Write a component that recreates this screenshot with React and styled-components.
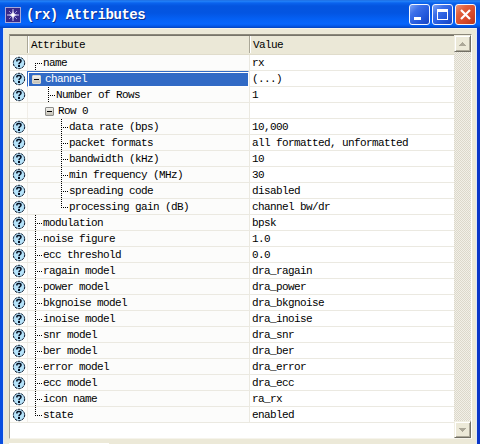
import React from "react";
import styled, { createGlobalStyle } from "styled-components";

const GlobalStyle = createGlobalStyle`
  html, body { margin: 0; padding: 0; }
  body { width: 480px; height: 444px; overflow: hidden; }
  * { box-sizing: border-box; }
`;

const Window = styled.main`
  width: 480px;
  height: 444px;
  display: flex;
  flex-direction: column;
  overflow: hidden;
  background: #ece9d8;
  font-family: "Liberation Mono", monospace;
  font-size: 11px;
  letter-spacing: -0.6px;
  color: #000;
`;

const TitleBar = styled.header`
  height: 28px;
  flex: none;
  display: flex;
  align-items: center;
  padding: 1px 5px 0 5px;
  background: linear-gradient(
    #1c66d8 0, #2484fa 1px, #0a63ee 3px, #0455df 6px, #0355e2 13px,
    #0460f4 19px, #0665fc 24px, #0358e8 26px, #0342bf 28px
  );
`;

const Title = styled.h1`
  flex: 1;
  margin: 0 0 0 5px;
  font-size: 14px;
  line-height: 28px;
  font-weight: bold;
  letter-spacing: -0.45px;
  color: #fff;
  text-shadow: 1px 1px 0 #0a2f8c;
`;

const Controls = styled.div`
  display: flex;
  gap: 2px;
  margin-right: -1px;
`;

const ControlButton = styled.button`
  width: 21px;
  height: 21px;
  padding: 0;
  border: 1px solid #f4f7ff;
  border-radius: 3px;
  display: flex;
  background: ${(p) =>
    p.$close
      ? "linear-gradient(135deg, #ee9478 0, #e0603c 30%, #d8492a 65%, #b9351a 100%)"
      : "linear-gradient(135deg, #7ea4f5 0, #3d70e9 30%, #2459dc 65%, #1743c2 100%)"};
`;

const Frame = styled.div`
  flex: 1;
  min-height: 0;
  border-left: 3px solid #0a4fe0;
  border-right: 3px solid #0a36c8;
  box-shadow: inset 1px 0 0 #dfe8f4, inset -1px 0 0 #dfe8f4, inset 0 1px 0 #f5f3ea;
  padding: 6px 5px 0 6px;
  display: flex;
  flex-direction: column;
`;

const Panel = styled.section`
  height: 405px;
  flex: none;
  display: flex;
  border: 1px solid #aca899;
  border-top-color: #8c887a;
  border-right-color: #fff;
  border-bottom-color: #f6f4ec;
  background: #fff;
`;

const Table = styled.div`
  flex: 1;
  display: flex;
  flex-direction: column;
`;

const GridLine = styled.div`
  display: grid;
  grid-template-columns: 17px 222px 1fr;
`;

const HeaderLine = styled(GridLine)`
  height: 20px;
  background: #ebe8d7;
  border-top: 1px solid #77746a;
  border-bottom: 1px solid #e0dccb;
`;

const HeaderCell = styled.div`
  padding-left: 3px;
  line-height: 19px;
  height: 17px;
  border-left: ${(p) => (p.$first ? "0" : "1px solid #aaa797")};
  box-shadow: ${(p) => (p.$first ? "none" : "inset 1px 0 0 #fff")};
`;

const Row = styled(GridLine)`
  height: 16px;
  border-bottom: 1px solid #ebe9e1;
`;

const HelpCell = styled.div`
  display: flex;
  padding: 1px 0 0 2px;
  background: #fdfdfb;
`;

const NameCell = styled.div`
  display: flex;
  height: ${(p) => (p.$selected ? "16px" : "15px")};
  border-left: 1px solid #f1eee8;
  background: #fcfcfb;
  padding-left: ${(p) => p.$indent}px;
  line-height: 16px;
  white-space: pre;
  ${(p) =>
    p.$selected &&
    `
    color: #fff;
    background: #316ac5;
    border: 1px solid #316ac5;
    border-right-color: #fff;
    border-bottom-color: #fff;
    box-shadow: inset 1px 1px 0 #fff;
    line-height: 14px;
  `}
`;

const ValueCell = styled.div`
  height: 15px;
  border-left: 1px solid #ebe9e1;
  padding-left: 2px;
  line-height: 16px;
  white-space: pre;
`;

const Toggle = styled.span`
  width: 9px;
  height: 9px;
  flex: none;
  margin: ${(p) => (p.$selected ? "3px 4px 0 0" : "4px 4px 0 0")};
  display: flex;
  align-items: center;
  justify-content: center;
  border: 1px solid ${(p) => (p.$selected ? "#dad7cd" : "#8b8b88")};
  border-radius: 1px;
  background: linear-gradient(#f3f2ee, #c4c0b4);
  &::before {
    content: "";
    width: 5px;
    height: 1px;
    background: #000;
  }
`;

const ScrollBar = styled.aside`
  width: 17px;
  display: flex;
  flex-direction: column;
  justify-content: space-between;
  background: repeating-conic-gradient(#dcd8cb 0 25%, #f2f0e8 0 50%) 0 0 / 2px 2px;
`;

const ScrollButton = styled.button`
  width: 17px;
  height: 17px;
  padding: 0;
  display: flex;
  align-items: center;
  justify-content: center;
  background: #ece9d8;
  border: 1px solid;
  border-color: #f1efe2 #716f64 #716f64 #f1efe2;
  box-shadow: inset 1px 1px 0 #fff, inset -1px -1px 0 #aca899;
`;

const FieldEdge = styled.div`
  width: 100px;
  height: 1px;
  margin-top: 4px;
  background: #fff;
`;

const Svg = styled.svg`
  display: block;
  flex: none;
`;

function StarLogo() {
  return (
    <Svg width="16" height="16" viewBox="0 0 16 16">
      <rect width="16" height="16" fill="#a9a8d8" />
      <rect x="1" y="1" width="14" height="14" fill="#38298a" />
      <path d="M8 2v12M2 8h12" stroke="#d6d0f4" strokeWidth="1" />
      <path d="M4 4l8 8M12 4l-8 8" stroke="#9e91d4" strokeWidth="1" />
      <path d="M8 4l1 3 3 1-3 1-1 3-1-3-3-1 3-1z" fill="#fff" />
    </Svg>
  );
}

function HelpIcon() {
  return (
    <Svg width="14" height="14" viewBox="0 0 14 14">
      <circle cx="7" cy="7" r="5.6" fill="#b5e3fa" stroke="#7c98ac" strokeWidth="0.9" />
      <circle
        cx="7"
        cy="7"
        r="5.7"
        fill="none"
        stroke="#101c30"
        strokeWidth="1"
        strokeDasharray="2.2 1.38"
      />
      <path
        d="M4.9 5.4V4.3Q5.3 3.4 7 3.4Q9 3.4 9 5Q9 6 7.9 6.7Q7 7.2 7 8.3"
        fill="none"
        stroke="#000a1c"
        strokeWidth="1.5"
      />
      <path d="M6 9h2v2H6z" fill="#000a1c" />
    </Svg>
  );
}

const branchPaths = {
  first: "M0.5 8v8",
  middle: "M0.5 0v16",
  last: "M0.5 0v9",
};

function Branch({ kind }) {
  return (
    <Svg width="8" height="16" viewBox="0 0 8 16" shapeRendering="crispEdges">
      <path d={branchPaths[kind]} stroke="#000" strokeDasharray="1 1" />
      <path d="M2 8.5h5" stroke="#000" strokeDasharray="1 1" />
    </Svg>
  );
}

function Arrow({ down }) {
  return (
    <Svg width="7" height="4" viewBox="0 0 7 4" shapeRendering="crispEdges">
      <path d={down ? "M0 0h7v1H0zM1 1h5v1H1zM2 2h3v1H2zM3 3h1v1H3z" : "M3 0h1v1H3zM2 1h3v1H2zM1 2h5v1H1zM0 3h7v1H0z"} fill="#aca899" />
    </Svg>
  );
}

const rows = [
  { name: "name", value: "rx", kind: "first", indent: 7 },
  { name: "channel", value: "(...)", kind: "toggle", indent: 4, selected: true },
  { name: "Number of Rows", value: "1", kind: "middle", indent: 20 },
  { name: "Row 0", value: "", kind: "toggle", indent: 17, noHelp: true },
  { name: "data rate (bps)", value: "10,000", kind: "middle", indent: 33 },
  { name: "packet formats", value: "all formatted, unformatted", kind: "middle", indent: 33 },
  { name: "bandwidth (kHz)", value: "10", kind: "middle", indent: 33 },
  { name: "min frequency (MHz)", value: "30", kind: "middle", indent: 33 },
  { name: "spreading code", value: "disabled", kind: "middle", indent: 33 },
  { name: "processing gain (dB)", value: "channel bw/dr", kind: "last", indent: 33 },
  { name: "modulation", value: "bpsk", kind: "middle", indent: 7 },
  { name: "noise figure", value: "1.0", kind: "middle", indent: 7 },
  { name: "ecc threshold", value: "0.0", kind: "middle", indent: 7 },
  { name: "ragain model", value: "dra_ragain", kind: "middle", indent: 7 },
  { name: "power model", value: "dra_power", kind: "middle", indent: 7 },
  { name: "bkgnoise model", value: "dra_bkgnoise", kind: "middle", indent: 7 },
  { name: "inoise model", value: "dra_inoise", kind: "middle", indent: 7 },
  { name: "snr model", value: "dra_snr", kind: "middle", indent: 7 },
  { name: "ber model", value: "dra_ber", kind: "middle", indent: 7 },
  { name: "error model", value: "dra_error", kind: "middle", indent: 7 },
  { name: "ecc model", value: "dra_ecc", kind: "middle", indent: 7 },
  { name: "icon name", value: "ra_rx", kind: "middle", indent: 7 },
  { name: "state", value: "enabled", kind: "last", indent: 7 },
];

export default function App() {
  return (
    <>
      <GlobalStyle />
      <Window>
        <TitleBar>
          <StarLogo />
          <Title>(rx) Attributes</Title>
          <Controls>
            <ControlButton aria-label="Minimize">
              <Svg width="19" height="19"><path d="M4 12h7v3H4z" fill="#fff" /></Svg>
            </ControlButton>
            <ControlButton aria-label="Maximize">
              <Svg width="19" height="19" shapeRendering="crispEdges">
                <path fillRule="evenodd" d="M4 4h11v11H4zM5 7v7h9V7z" fill="#fff" />
              </Svg>
            </ControlButton>
            <ControlButton aria-label="Close" $close>
              <Svg width="19" height="19"><path d="M5 5l9 9M14 5l-9 9" stroke="#fff" strokeWidth="2.2" /></Svg>
            </ControlButton>
          </Controls>
        </TitleBar>
        <Frame>
          <Panel>
            <Table>
              <HeaderLine>
                <HeaderCell $first />
                <HeaderCell>Attribute</HeaderCell>
                <HeaderCell>Value</HeaderCell>
              </HeaderLine>
              {rows.map((r) => (
                <Row key={r.name}>
                  <HelpCell>{!r.noHelp && <HelpIcon />}</HelpCell>
                  <NameCell $indent={r.indent} $selected={r.selected}>
                    {r.kind === "toggle" ? <Toggle $selected={r.selected} /> : <Branch kind={r.kind} />}
                    {r.name}
                  </NameCell>
                  <ValueCell>{r.value}</ValueCell>
                </Row>
              ))}
            </Table>
            <ScrollBar>
              <ScrollButton aria-label="Scroll up"><Arrow /></ScrollButton>
              <ScrollButton aria-label="Scroll down"><Arrow down /></ScrollButton>
            </ScrollBar>
          </Panel>
          <FieldEdge />
        </Frame>
      </Window>
    </>
  );
}
